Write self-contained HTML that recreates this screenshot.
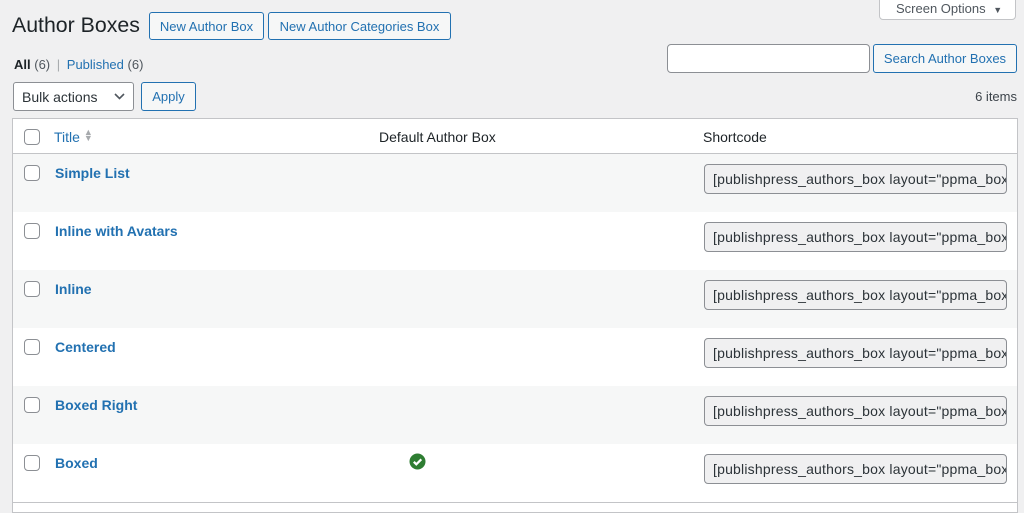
<!DOCTYPE html>
<html><head><style>
*{box-sizing:border-box;margin:0;padding:0}
body{width:1024px;height:509px;overflow:hidden;background:#f0f0f1;font-family:"Liberation Sans",sans-serif;font-size:13px;color:#3c434a;position:relative}
.a{position:absolute}
.btn{position:absolute;border:1px solid #2271b1;color:#2271b1;background:#f6f7f7;border-radius:3px;font-size:13px;display:flex;align-items:center;justify-content:center}
.cb{position:absolute;left:24px;width:16px;height:16px;border:1px solid #8c8f94;border-radius:4px;background:#fff}
.row{position:absolute;left:13px;width:1004px;height:58px}
.t{position:absolute;left:42px;top:11px;font-weight:bold;color:#2271b1;font-size:14px}
.sc{position:absolute;left:691px;top:10px;width:303px;height:30px;border:1px solid #8c8f94;border-radius:4px;background:#f0f0f1;font-size:14px;letter-spacing:0.2px;color:#2c3338;padding:6px 8px;white-space:nowrap;overflow:hidden}
.rc{left:11px}
</style></head><body>
<div class="a" style="left:12px;top:13px;font-size:21.3px;color:#1d2327">Author Boxes</div>
<div class="btn" style="left:149px;top:12px;width:115px;height:28px">New Author Box</div>
<div class="btn" style="left:268px;top:12px;width:183px;height:28px">New Author Categories Box</div>
<div class="a" style="left:879px;top:-6px;width:137px;height:26px;background:#fff;border:1px solid #c3c4c7;border-radius:0 0 4px 4px;font-size:13px;color:#50575e;padding:6px 0 0 16px">Screen Options <span style="font-size:9px;margin-left:4px">▼</span></div>
<div class="a" style="left:14px;top:57px"><b style="color:#1d2327">All</b> <span style="color:#50575e">(6)</span> <span style="color:#a7aaad;margin:0 3px">|</span> <span style="color:#2271b1">Published</span> <span style="color:#50575e">(6)</span></div>
<div class="a" style="left:667px;top:44px;width:203px;height:29px;background:#fff;border:1px solid #8c8f94;border-radius:4px"></div>
<div class="btn" style="left:873px;top:44px;width:144px;height:29px">Search Author Boxes</div>
<div class="a" style="left:13px;top:82px;width:121px;height:29px;background:#fff;border:1px solid #8c8f94;border-radius:3px;font-size:14px;color:#2c3338;padding:6px 0 0 8px">Bulk actions<svg style="position:absolute;right:8px;top:10px" width="11" height="7" viewBox="0 0 11 7"><path d="M1 1l4.5 4.5L10 1" fill="none" stroke="#50575e" stroke-width="1.6"/></svg></div>
<div class="btn" style="left:141px;top:82px;width:55px;height:29px;font-size:13px">Apply</div>
<div class="a" style="right:7px;top:89px;color:#3c434a">6 items</div>
<div class="a" style="left:12px;top:118px;width:1006px;height:395px;background:#fff;border:1px solid #c3c4c7"></div>
<div class="a" style="left:13px;top:153px;width:1004px;height:1px;background:#c3c4c7"></div>
<div class="cb" style="top:129px"></div>
<div class="a" style="left:54px;top:129px;color:#2271b1;font-size:14px">Title <span style="color:#a7aaad;font-size:9px;display:inline-block;line-height:6px;vertical-align:1px">▲<br>▼</span></div>
<div class="a" style="left:379px;top:129px;font-size:14px;color:#1d2327">Default Author Box</div>
<div class="a" style="left:703px;top:129px;font-size:14px;color:#1d2327">Shortcode</div>

<div class="row" style="top:154px;background:#f6f7f7"><div class="cb rc" style="top:11px"></div><div class="t">Simple List</div><div class="sc">[publishpress_authors_box layout="ppma_boxes_1"]</div></div>
<div class="row" style="top:212px;background:#fff"><div class="cb rc" style="top:11px"></div><div class="t">Inline with Avatars</div><div class="sc">[publishpress_authors_box layout="ppma_boxes_2"]</div></div>
<div class="row" style="top:270px;background:#f6f7f7"><div class="cb rc" style="top:11px"></div><div class="t">Inline</div><div class="sc">[publishpress_authors_box layout="ppma_boxes_3"]</div></div>
<div class="row" style="top:328px;background:#fff"><div class="cb rc" style="top:11px"></div><div class="t">Centered</div><div class="sc">[publishpress_authors_box layout="ppma_boxes_4"]</div></div>
<div class="row" style="top:386px;background:#f6f7f7"><div class="cb rc" style="top:11px"></div><div class="t">Boxed Right</div><div class="sc">[publishpress_authors_box layout="ppma_boxes_5"]</div></div>
<div class="row" style="top:444px;background:#fff"><div class="cb rc" style="top:11px"></div><div class="t">Boxed</div>
<svg style="position:absolute;left:396px;top:9px" width="17" height="17" viewBox="0 0 17 17"><circle cx="8.5" cy="8.5" r="8" fill="#2e7d32"/><path d="M4.8 8.8l2.5 2.5 5-5" fill="none" stroke="#fff" stroke-width="2.2"/></svg>
<div class="sc">[publishpress_authors_box layout="ppma_boxes_6"]</div></div>
<div class="a" style="left:13px;top:502px;width:1004px;height:1px;background:#c3c4c7"></div>
</body></html>
